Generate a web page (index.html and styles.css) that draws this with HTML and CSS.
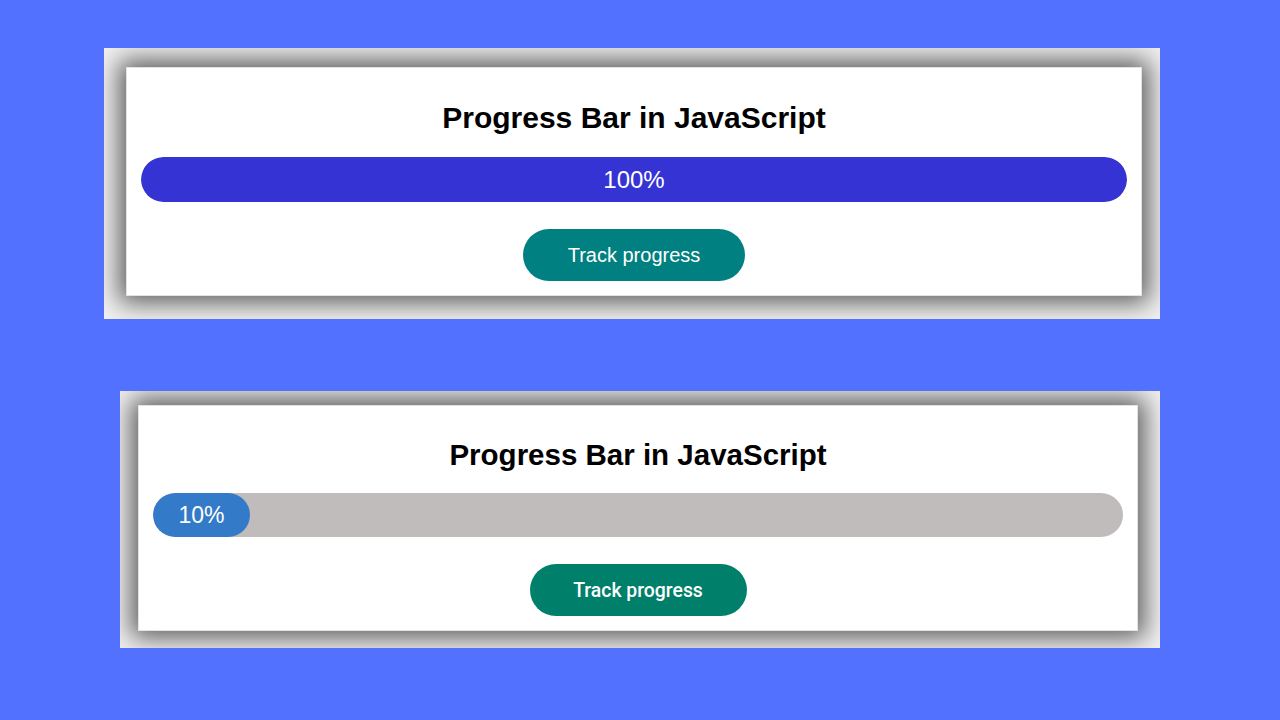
FILE: index.html
```html
<!DOCTYPE html>
<html>
<head>
<meta charset="utf-8">
<link rel="stylesheet" href="styles.css">
</head>
<body>
<div class="page">
  <div class="shot shot-one">
    <div class="card card-one">
      <h2 class="title title-one">Progress Bar in JavaScript</h2>
      <div class="track track-one">
        <div class="fill fill-one" style="width:100%">100%</div>
      </div>
      <button class="btn btn-one">Track progress</button>
    </div>
  </div>
  <div class="shot shot-two">
    <div class="card card-two">
      <h2 class="title title-two">Progress Bar in JavaScript</h2>
      <div class="track track-two">
        <div class="fill fill-two" style="width:10%">10%</div>
      </div>
      <button class="btn btn-two">Track progress</button>
    </div>
  </div>
</div>
</body>
</html>
```
FILE: styles.css
```css
html, body {
  margin: 0;
  padding: 0;
  background: #5271ff;
  width: 1280px;
  height: 720px;
  overflow: hidden;
  font-family: "Liberation Sans", Arial, sans-serif;
}
.page {
  display: flex;
  flex-direction: column;
  padding-top: 48px;
}
.shot {
  background: #f2f2f2;
  overflow: hidden;
  box-sizing: border-box;
}
.shot-one {
  margin-left: 104px;
  width: 1056px;
  height: 271px;
  padding: 19px 18px 23px 22px;
}
.shot-two {
  margin-left: 120px;
  margin-top: 72px;
  width: 1040px;
  height: 257px;
  padding: 14px 22px 17px 18px;
}
.card {
  background: #fff;
  height: 100%;
  box-sizing: border-box;
  padding: 0 15px;
  display: flex;
  flex-direction: column;
  align-items: center;
  border: 1px solid #e2e2e2;
  box-shadow: 0 0 24px 7px rgba(0, 0, 0, 0.62);
}
.card-one { padding: 33px 14px 0; }
.card-two { padding: 32px 14px 0; }
.title {
  margin: 0;
  line-height: 34px;
  font-weight: bold;
  color: #000;
}
.title-one { font-size: 30px; }
.title-two { font-size: 29.5px; }
.track {
  align-self: stretch;
  border-radius: 23px;
  overflow: hidden;
  background: #c0bcbc;
}
.track-one { margin-top: 22px; height: 45px; }
.track-two { margin-top: 21px; height: 44px; }
.fill {
  height: 100%;
  border-radius: 23px;
  color: #fff;
  display: flex;
  align-items: center;
  justify-content: center;
}
.fill-one { background: #3633d5; font-size: 24px; }
.fill-two { background: #337ac8; font-size: 23px; }
.btn {
  border: none;
  border-radius: 26px;
  height: 52px;
  color: #fff;
  font-family: "Liberation Sans", Arial, sans-serif;
  font-size: 20px;
  padding: 0;
}
.btn-one {
  margin-top: 27px;
  width: 222px;
  background: #008080;
}
.btn-two {
  margin-top: 27px;
  width: 217px;
  background: #00806a;
  font-family: Roboto, sans-serif;
  font-weight: 500;
  font-size: 19.4px;
}
```
